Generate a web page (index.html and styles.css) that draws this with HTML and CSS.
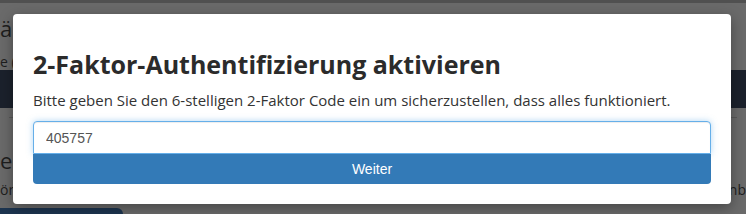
FILE: index.html
```html
<!DOCTYPE html>
<html lang="de">

<head>
    <meta charset="UTF-8">
    <meta name="viewport" content="width=device-width, initial-scale=1.0">
    <title>2-Faktor aktivieren</title>
    <link rel="stylesheet" href="styles.css">
</head>

<body>
    <div class="seite">
        <div class="kopf"></div>
        <div class="titel-hinten">än</div>
        <div class="untertitel-hinten">e (</div>
        <div class="band-hinten"></div>
        <div class="abschnitt-hinten">
            <div class="abschnitt-titel">er</div>
            <div class="abschnitt-zeile">
                <span>ör</span>
                <span>nb</span>
            </div>
        </div>
        <div class="leiste-hinten"></div>
    </div>

    <div class="modal">
        <h2 class="modal-titel">2-Faktor-Authentifizierung aktivieren</h2>
        <p class="modal-text">Bitte geben Sie den 6-stelligen 2-Faktor Code ein um sicherzustellen, dass alles funktioniert.</p>
        <form class="code-form">
            <input class="code-eingabe" type="text" value="405757">
            <button class="btn-weiter" type="button">Weiter</button>
        </form>
    </div>
</body>

</html>
```

FILE: styles.css
```css
body {
    margin: 0;
    background-color: #6a6a6a;
    font-family: "Open Sans", Arial, sans-serif;
    overflow: hidden;
    height: 214px;
}

.seite {
    position: relative;
    height: 214px;
    color: #1e1e1e;
}

.kopf {
    height: 3px;
    background-color: #505050;
}

.titel-hinten {
    font-size: 22px;
    line-height: 30px;
    margin-top: 10px;
}

.untertitel-hinten {
    font-size: 14px;
    line-height: 20px;
    margin-top: 9px;
}

.band-hinten {
    height: 38px;
    margin-top: -2px;
    background-color: #1b212c;
    border-bottom: 9px solid #6a6a6a;
    box-shadow: 0 10px 0 -9px #585858;
}

.abschnitt-hinten {
    margin-top: 28px;
    white-space: nowrap;
}

.abschnitt-titel {
    font-size: 22px;
    line-height: 30px;
}

.abschnitt-zeile {
    display: flex;
    justify-content: space-between;
    font-size: 14px;
    line-height: 20px;
    margin-top: 5px;
}

.leiste-hinten {
    position: absolute;
    left: 0;
    top: 208px;
    width: 123px;
    height: 10px;
    background-color: #1d3550;
    border-radius: 0 6px 0 0;
}

.modal {
    position: absolute;
    left: 13px;
    top: 14px;
    width: 678px;
    padding: 20px;
    background-color: white;
    border-radius: 4px;
    box-shadow: 0 4px 14px rgba(0, 0, 0, 0.35);
}

.modal-titel {
    margin: 14px 0 0;
    font-family: "Open Sans", Arial, sans-serif;
    font-size: 25px;
    font-weight: 700;
    line-height: 32px;
    color: #2b2b2b;
}

.modal-text {
    margin: 10px 0 11px;
    font-size: 15px;
    line-height: 20px;
    color: #333;
}

.code-form {
    display: flex;
    flex-direction: column;
}

.code-eingabe {
    box-sizing: border-box;
    height: 33px;
    padding: 6px 12px;
    border: 1px solid #66afe9;
    border-radius: 4px 4px 0 0;
    box-shadow: inset 0 1px 1px rgba(0, 0, 0, .075), 0 0 6px rgba(102, 175, 233, .5);
    font-family: "Liberation Sans", Arial, sans-serif;
    font-size: 14px;
    color: #555;
    outline: none;
}

.btn-weiter {
    height: 30px;
    border: none;
    border-radius: 0 0 4px 4px;
    background-color: #337ab7;
    color: white;
    font-family: "Liberation Sans", Arial, sans-serif;
    font-size: 14px;
    cursor: pointer;
}
```
